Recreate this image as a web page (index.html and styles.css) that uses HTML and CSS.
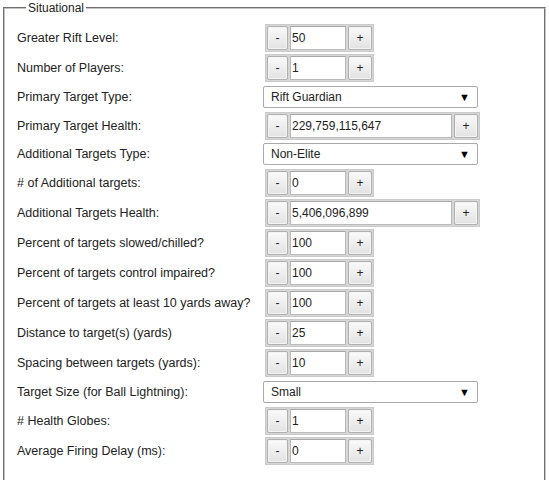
FILE: index.html
```html
<!DOCTYPE html>
<html>
<head>
<meta charset="utf-8">
<link rel="stylesheet" href="styles.css">
</head>
<body>
<fieldset class="box">
  <legend class="title">Situational</legend>
  <div class="grid">
    <div class="lbl">Greater Rift Level:</div>
    <div class="spin"><button class="btn">-</button><span class="inp">50</span><button class="btn plus">+</button></div>

    <div class="lbl">Number of Players:</div>
    <div class="spin"><button class="btn">-</button><span class="inp">1</span><button class="btn plus">+</button></div>

    <div class="lbl">Primary Target Type:</div>
    <div class="sel"><span>Rift Guardian</span><span class="arr">▼</span></div>

    <div class="lbl">Primary Target Health:</div>
    <div class="spin"><button class="btn">-</button><span class="inp wide">229,759,115,647</span><button class="btn plus">+</button></div>

    <div class="lbl">Additional Targets Type:</div>
    <div class="sel"><span>Non-Elite</span><span class="arr">▼</span></div>

    <div class="lbl"># of Additional targets:</div>
    <div class="spin"><button class="btn">-</button><span class="inp">0</span><button class="btn plus">+</button></div>

    <div class="lbl">Additional Targets Health:</div>
    <div class="spin"><button class="btn">-</button><span class="inp wide">5,406,096,899</span><button class="btn plus">+</button></div>

    <div class="lbl">Percent of targets slowed/chilled?</div>
    <div class="spin"><button class="btn">-</button><span class="inp">100</span><button class="btn plus">+</button></div>

    <div class="lbl">Percent of targets control impaired?</div>
    <div class="spin"><button class="btn">-</button><span class="inp">100</span><button class="btn plus">+</button></div>

    <div class="lbl">Percent of targets at least 10 yards away?</div>
    <div class="spin"><button class="btn">-</button><span class="inp">100</span><button class="btn plus">+</button></div>

    <div class="lbl">Distance to target(s) (yards)</div>
    <div class="spin"><button class="btn">-</button><span class="inp">25</span><button class="btn plus">+</button></div>

    <div class="lbl">Spacing between targets (yards):</div>
    <div class="spin"><button class="btn">-</button><span class="inp">10</span><button class="btn plus">+</button></div>

    <div class="lbl">Target Size (for Ball Lightning):</div>
    <div class="sel"><span>Small</span><span class="arr">▼</span></div>

    <div class="lbl"># Health Globes:</div>
    <div class="spin"><button class="btn">-</button><span class="inp">1</span><button class="btn plus">+</button></div>

    <div class="lbl">Average Firing Delay (ms):</div>
    <div class="spin"><button class="btn">-</button><span class="inp">0</span><button class="btn plus">+</button></div>
  </div>
</fieldset>
</body>
</html>
```

FILE: styles.css
```css
html, body {
  margin: 0;
  padding: 0;
  background: #fff;
}
body {
  font-family: "Liberation Sans", Arial, sans-serif;
  font-size: 12.5px;
  color: #222;
}
.box {
  margin: 1px 3px 0 3px;
  width: 543px;
  box-sizing: border-box;
  border: 2px groove #c4c4c4;
  padding: 8px 0 16px 12px;
}
.title {
  padding: 0 2px;
  margin-left: 9px;
  font-size: 12px;
  line-height: 14px;
  color: #222;
}
.grid {
  display: grid;
  grid-template-columns: 246px 1fr;
  grid-template-rows: 30px 30px 27.5px 30px 27.5px 30px 30px 30px 30px 30px 30px 30px 27.5px 30px 30px;
  align-items: center;
}
.lbl {
  white-space: nowrap;
}
.spin {
  display: flex;
  align-items: stretch;
  width: max-content;
  height: 28px;
  box-sizing: border-box;
  background: #d6d6d6;
  border: 1px solid #cbcbcb;
  padding: 1px;
  gap: 2px;
  margin-left: 2px;
}
.btn {
  font-family: "Liberation Sans", Arial, sans-serif;
  font-size: 12px;
  color: #222;
  width: 21px;
  padding: 0;
  border: 1px solid #b0b0b0;
  border-radius: 2px;
  background: linear-gradient(#fafafa, #e2e2e2);
  box-shadow: inset 0 0 0 1px #f4f4f4;
}
.plus {
  width: 24px;
}
.inp {
  display: flex;
  align-items: center;
  width: 56px;
  box-sizing: border-box;
  background: #fff;
  border: 1px solid #bbb;
  border-top-color: #a8a8a8;
  padding-left: 1px;
  font-size: 12px;
}
.inp.wide {
  width: 162px;
}
.sel {
  display: flex;
  justify-content: space-between;
  align-items: center;
  width: 215px;
  height: 22px;
  box-sizing: border-box;
  border: 1px solid #aaa;
  border-radius: 2px;
  padding: 0 7px;
  background: #fff;
  font-size: 12px;
}
.arr {
  font-size: 11px;
  color: #000;
}
```
